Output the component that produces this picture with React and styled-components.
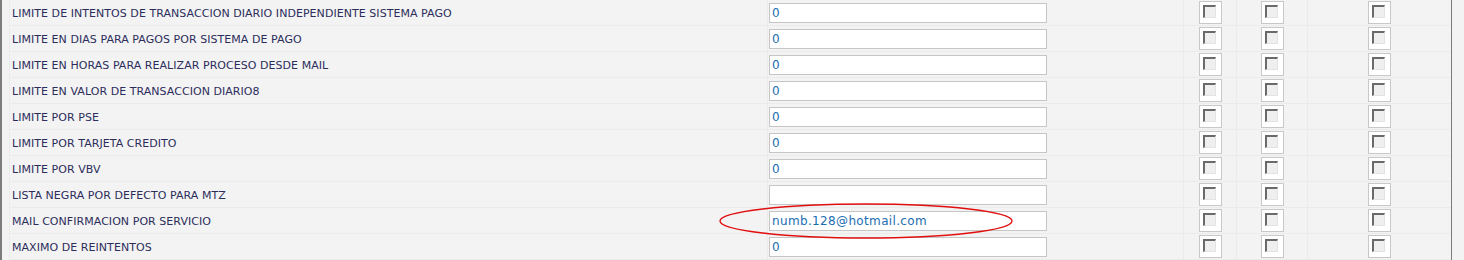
import React from 'react';
import styled, { createGlobalStyle } from 'styled-components';

const GlobalStyle = createGlobalStyle`
  html, body {
    margin: 0;
    padding: 0;
    background: #f3f3f3;
  }
`;

const Frame = styled.div`
  position: relative;
  width: 1452px;
  height: 260px;
  overflow: hidden;
  border-left: 2px solid #7c7c7c;
  border-right: 1px solid #7c7c7c;
  box-sizing: border-box;
  padding-left: 7px;
  background: #f3f3f3;
`;

const Table = styled.table`
  border-collapse: collapse;
  table-layout: fixed;
  width: 1442px;
  margin-top: -1px;
`;

const Row = styled.tr`
  height: 26px;
`;

const Cell = styled.td`
  border: 1px solid #ebebeb;
  padding: 0;
  height: 25px;
  box-sizing: border-box;
  text-align: ${(p) => (p.$center ? 'center' : 'left')};
  vertical-align: middle;
`;

const Label = styled.span`
  display: block;
  padding: 1px 0 0 2px;
  font-family: 'DejaVu Sans', Verdana, sans-serif;
  font-size: 11px;
  letter-spacing: 0.05px;
  color: #2d2d5c;
  white-space: nowrap;
`;

const TextInput = styled.div`
  width: 278px;
  height: 20px;
  margin-left: 1px;
  box-sizing: border-box;
  border: 1px solid #c6c6c6;
  background: #fff;
  padding: 1px 0 0 2px;
  font-family: 'DejaVu Sans', Verdana, sans-serif;
  font-size: 12px;
  letter-spacing: 0.35px;
  line-height: 17px;
  color: #1b6db3;
  white-space: nowrap;
`;

const CheckWrap = styled.span`
  display: inline-block;
  width: 23px;
  height: 23px;
  box-sizing: border-box;
  border: 1px solid #c8c8c8;
  background: #fff;
  padding: 3px 0 0 3px;
  vertical-align: middle;
`;

const CheckBox = styled.span`
  display: block;
  width: 13px;
  height: 13px;
  box-sizing: border-box;
  border-top: 2px solid #6a6a6a;
  border-left: 2px solid #6a6a6a;
  border-right: 1px solid #e3e3e3;
  border-bottom: 1px solid #e3e3e3;
  background: #efefef;
`;

const Annotation = styled.svg`
  position: absolute;
  left: 716px;
  top: 202px;
  pointer-events: none;
`;

const rows = [
  ['LIMITE DE INTENTOS DE TRANSACCION DIARIO INDEPENDIENTE SISTEMA PAGO', '0'],
  ['LIMITE EN DIAS PARA PAGOS POR SISTEMA DE PAGO', '0'],
  ['LIMITE EN HORAS PARA REALIZAR PROCESO DESDE MAIL', '0'],
  ['LIMITE EN VALOR DE TRANSACCION DIARIO8', '0'],
  ['LIMITE POR PSE', '0'],
  ['LIMITE POR TARJETA CREDITO', '0'],
  ['LIMITE POR VBV', '0'],
  ['LISTA NEGRA POR DEFECTO PARA MTZ', ''],
  ['MAIL CONFIRMACION POR SERVICIO', 'numb.128@hotmail.com'],
  ['MAXIMO DE REINTENTOS', '0'],
];

const Check = () => (
  <CheckWrap>
    <CheckBox />
  </CheckWrap>
);

const App = () => (
  <>
    <GlobalStyle />
    <Frame>
      <Table>
        <colgroup>
          <col style={{ width: 758 }} />
          <col style={{ width: 416 }} />
          <col style={{ width: 53 }} />
          <col style={{ width: 71 }} />
          <col style={{ width: 144 }} />
        </colgroup>
        <tbody>
          {rows.map(([label, value], i) => (
            <Row key={i}>
              <Cell>
                <Label>{label}</Label>
              </Cell>
              <Cell>
                <TextInput>{value}</TextInput>
              </Cell>
              <Cell $center>
                <Check />
              </Cell>
              <Cell $center>
                <Check />
              </Cell>
              <Cell $center>
                <Check />
              </Cell>
            </Row>
          ))}
        </tbody>
      </Table>
      <Annotation width="300" height="40" viewBox="0 0 300 40">
        <ellipse cx="148" cy="19" rx="146" ry="17" fill="none" stroke="#e01010" strokeWidth="1.4" />
      </Annotation>
    </Frame>
  </>
);

export default App;
